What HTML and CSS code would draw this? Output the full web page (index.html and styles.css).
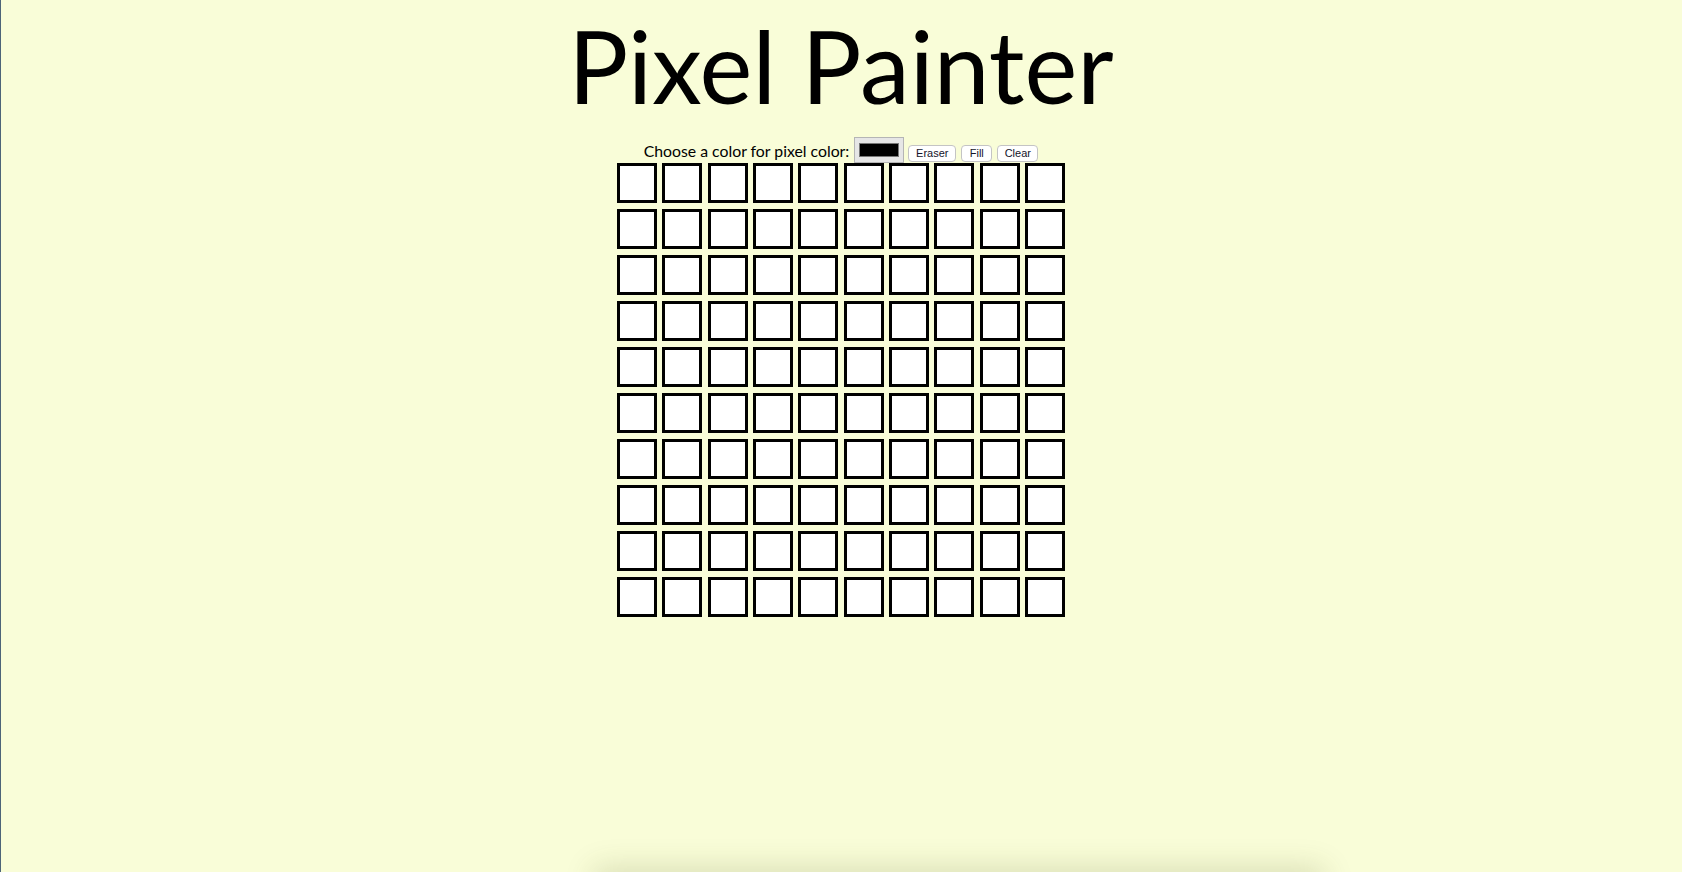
FILE: index.html
```html
<!DOCTYPE html>
<html>
<head>
<meta charset="utf-8">
<title>Pixel Painter</title>
<link rel="stylesheet" href="styles.css">
</head>
<body>
<h1 class="title">Pixel Painter</h1>
<div class="controls">
  <span class="label">Choose a color for pixel color:</span>
  <div class="color-input"><div class="color-swatch"></div></div>
  <button class="btn btn-eraser">Eraser</button>
  <button class="btn btn-fill">Fill</button>
  <button class="btn btn-clear">Clear</button>
</div>
<div class="grid">
  <div class="cell"></div><div class="cell"></div><div class="cell"></div><div class="cell"></div><div class="cell"></div><div class="cell"></div><div class="cell"></div><div class="cell"></div><div class="cell"></div><div class="cell"></div>
  <div class="cell"></div><div class="cell"></div><div class="cell"></div><div class="cell"></div><div class="cell"></div><div class="cell"></div><div class="cell"></div><div class="cell"></div><div class="cell"></div><div class="cell"></div>
  <div class="cell"></div><div class="cell"></div><div class="cell"></div><div class="cell"></div><div class="cell"></div><div class="cell"></div><div class="cell"></div><div class="cell"></div><div class="cell"></div><div class="cell"></div>
  <div class="cell"></div><div class="cell"></div><div class="cell"></div><div class="cell"></div><div class="cell"></div><div class="cell"></div><div class="cell"></div><div class="cell"></div><div class="cell"></div><div class="cell"></div>
  <div class="cell"></div><div class="cell"></div><div class="cell"></div><div class="cell"></div><div class="cell"></div><div class="cell"></div><div class="cell"></div><div class="cell"></div><div class="cell"></div><div class="cell"></div>
  <div class="cell"></div><div class="cell"></div><div class="cell"></div><div class="cell"></div><div class="cell"></div><div class="cell"></div><div class="cell"></div><div class="cell"></div><div class="cell"></div><div class="cell"></div>
  <div class="cell"></div><div class="cell"></div><div class="cell"></div><div class="cell"></div><div class="cell"></div><div class="cell"></div><div class="cell"></div><div class="cell"></div><div class="cell"></div><div class="cell"></div>
  <div class="cell"></div><div class="cell"></div><div class="cell"></div><div class="cell"></div><div class="cell"></div><div class="cell"></div><div class="cell"></div><div class="cell"></div><div class="cell"></div><div class="cell"></div>
  <div class="cell"></div><div class="cell"></div><div class="cell"></div><div class="cell"></div><div class="cell"></div><div class="cell"></div><div class="cell"></div><div class="cell"></div><div class="cell"></div><div class="cell"></div>
  <div class="cell"></div><div class="cell"></div><div class="cell"></div><div class="cell"></div><div class="cell"></div><div class="cell"></div><div class="cell"></div><div class="cell"></div><div class="cell"></div><div class="cell"></div>
</div>
<div class="window-edge"></div>
<div class="dock-shadow"></div>
</body>
</html>
```
FILE: styles.css
```css
html, body {
  margin: 0;
  padding: 0;
  height: 100%;
  overflow: hidden;
}

body {
  background: #f9fdd8;
  font-family: Lato, "Noto Sans", sans-serif;
  color: #000;
}

.title {
  margin: 5px 0 0 0;
  font-family: Lato, "Noto Sans", sans-serif;
  font-weight: 400;
  font-size: 100px;
  line-height: 120px;
  height: 120px;
  text-align: center;
}

.controls {
  margin-top: 12px;
  display: flex;
  justify-content: center;
  align-items: flex-end;
  height: 26px;
}

.label {
  font-size: 15.8px;
  line-height: 20px;
  margin-bottom: 2px;
  margin-right: 5px;
}

.color-input {
  box-sizing: border-box;
  width: 50px;
  height: 26px;
  background: #e6e6e6;
  border: 1px solid #b5b5b5;
  padding: 5px 4px;
  margin-right: 4px;
}

.color-swatch {
  box-sizing: border-box;
  width: 100%;
  height: 100%;
  background: #000;
  border: 1px solid #777;
}

.btn {
  box-sizing: border-box;
  height: 17px;
  margin: 0 0 1px 0;
  padding: 0 4px;
  background: #fff;
  border: 1px solid #c4c4c4;
  border-radius: 4px;
  font-family: "Liberation Sans", Arial, sans-serif;
  font-size: 11px;
  line-height: 15px;
  color: #14142a;
}

.btn-eraser { width: 48px; }
.btn-fill { width: 31px; margin-left: 5px; }
.btn-clear { width: 41px; margin-left: 5px; }

.grid {
  display: grid;
  grid-template-columns: repeat(10, 40px);
  grid-auto-rows: 40px;
  column-gap: 5.3px;
  row-gap: 6px;
  justify-content: center;
}

.cell {
  box-sizing: border-box;
  background: #fff;
  border: 3px solid #000;
}

.window-edge {
  position: fixed;
  left: 0;
  top: 0;
  width: 1px;
  height: 100%;
  background: #4d6478;
}

.dock-shadow {
  position: fixed;
  left: 598px;
  width: 722px;
  bottom: -24px;
  height: 24px;
  box-shadow: 0 0 30px 4px rgba(70, 80, 20, 0.18);
}
```
